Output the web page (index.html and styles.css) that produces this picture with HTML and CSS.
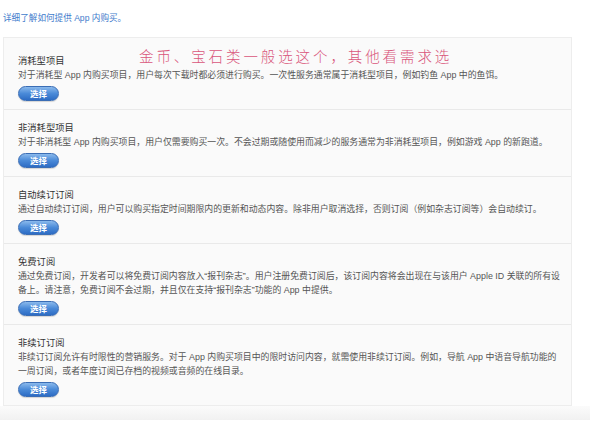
FILE: index.html
```html
<!DOCTYPE html>
<html>
  <head>
    <meta charset="utf-8">
    <title>App 内购买项目类型</title>
    <link rel="stylesheet" href="styles.css">
  </head>
  <body>
    <p class="intro"><a href="#">详细了解如何提供 App 内购买。</a></p>

    <div class="panel">
      <div class="note">金币、宝石类一般选这个，其他看需求选</div>

      <div class="item first">
        <h3>消耗型项目</h3>
        <p>对于消耗型 App 内购买项目，用户每次下载时都必须进行购买。一次性服务通常属于消耗型项目，例如钓鱼 App 中的鱼饵。</p>
        <button class="pick">选择</button>
      </div>

      <div class="item">
        <h3>非消耗型项目</h3>
        <p>对于非消耗型 App 内购买项目，用户仅需要购买一次。不会过期或随使用而减少的服务通常为非消耗型项目，例如游戏 App 的新跑道。</p>
        <button class="pick">选择</button>
      </div>

      <div class="item">
        <h3>自动续订订阅</h3>
        <p>通过自动续订订阅，用户可以购买指定时间期限内的更新和动态内容。除非用户取消选择，否则订阅（例如杂志订阅等）会自动续订。</p>
        <button class="pick">选择</button>
      </div>

      <div class="item">
        <h3>免费订阅</h3>
        <p>通过免费订阅，开发者可以将免费订阅内容放入“报刊杂志”。用户注册免费订阅后，该订阅内容将会出现在与该用户 Apple ID 关联的所有设备上。请注意，免费订阅不会过期，并且仅在支持“报刊杂志”功能的 App 中提供。</p>
        <button class="pick">选择</button>
      </div>

      <div class="item">
        <h3>非续订订阅</h3>
        <p>非续订订阅允许有时限性的营销服务。对于 App 内购买项目中的限时访问内容，就需使用非续订订阅。例如，导航 App 中语音导航功能的<br>一周订阅，或者年度订阅已存档的视频或音频的在线目录。</p>
        <button class="pick">选择</button>
      </div>
    </div>
    <div class="footer"></div>
  </body>
</html>
```

FILE: styles.css
```css
html {
  background: #fff;
}
body {
  margin: 0;
  width: 590px;
  font-family: "Liberation Sans", "Noto Sans CJK SC", sans-serif;
  color: #333;
}
.intro {
  margin: 0;
  padding: 12px 0 0 3px;
  height: 25px;
  font-size: 8.6px;
  line-height: 13px;
}
.intro a {
  color: #3f7ccc;
  text-decoration: none;
}
.panel {
  position: relative;
  margin-left: 3px;
  width: 567px;
  background-color: #fafafa;
  border: 1px solid #ededed;
}
.note {
  position: absolute;
  left: 135px;
  top: 8px;
  font-family: "Noto Sans CJK SC", sans-serif;
  font-weight: 300;
  font-size: 14.5px;
  line-height: 20px;
  letter-spacing: 2.9px;
  color: #d9567a;
}
.item {
  padding: 11px 8px 8px 14px;
  border-top: 1px solid #e9e9e9;
}
.item.first {
  border-top: none;
  padding-top: 16px;
}
.item h3 {
  margin: 0;
  font-size: 9.3px;
  font-weight: normal;
  line-height: 14px;
  color: #333;
}
.item p {
  margin: 0;
  font-size: 8.9px;
  line-height: 14px;
  color: #555;
}
.pick {
  display: block;
  margin-top: 4px;
  width: 41px;
  height: 15px;
  padding: 0;
  border: 1px solid #3a6db5;
  border-radius: 8px;
  background: linear-gradient(to bottom, #8ab9ec, #4a8ad8 50%, #2d6cc4);
  box-shadow: 0 1px 1px rgba(0, 0, 0, 0.15);
  color: #fff;
  font-family: "Noto Sans CJK SC", sans-serif;
  font-size: 8.5px;
  font-weight: bold;
  line-height: 13px;
}
.footer {
  height: 14px;
  background: linear-gradient(to bottom, #fbfbfb, #f1f1f1);
}
```
